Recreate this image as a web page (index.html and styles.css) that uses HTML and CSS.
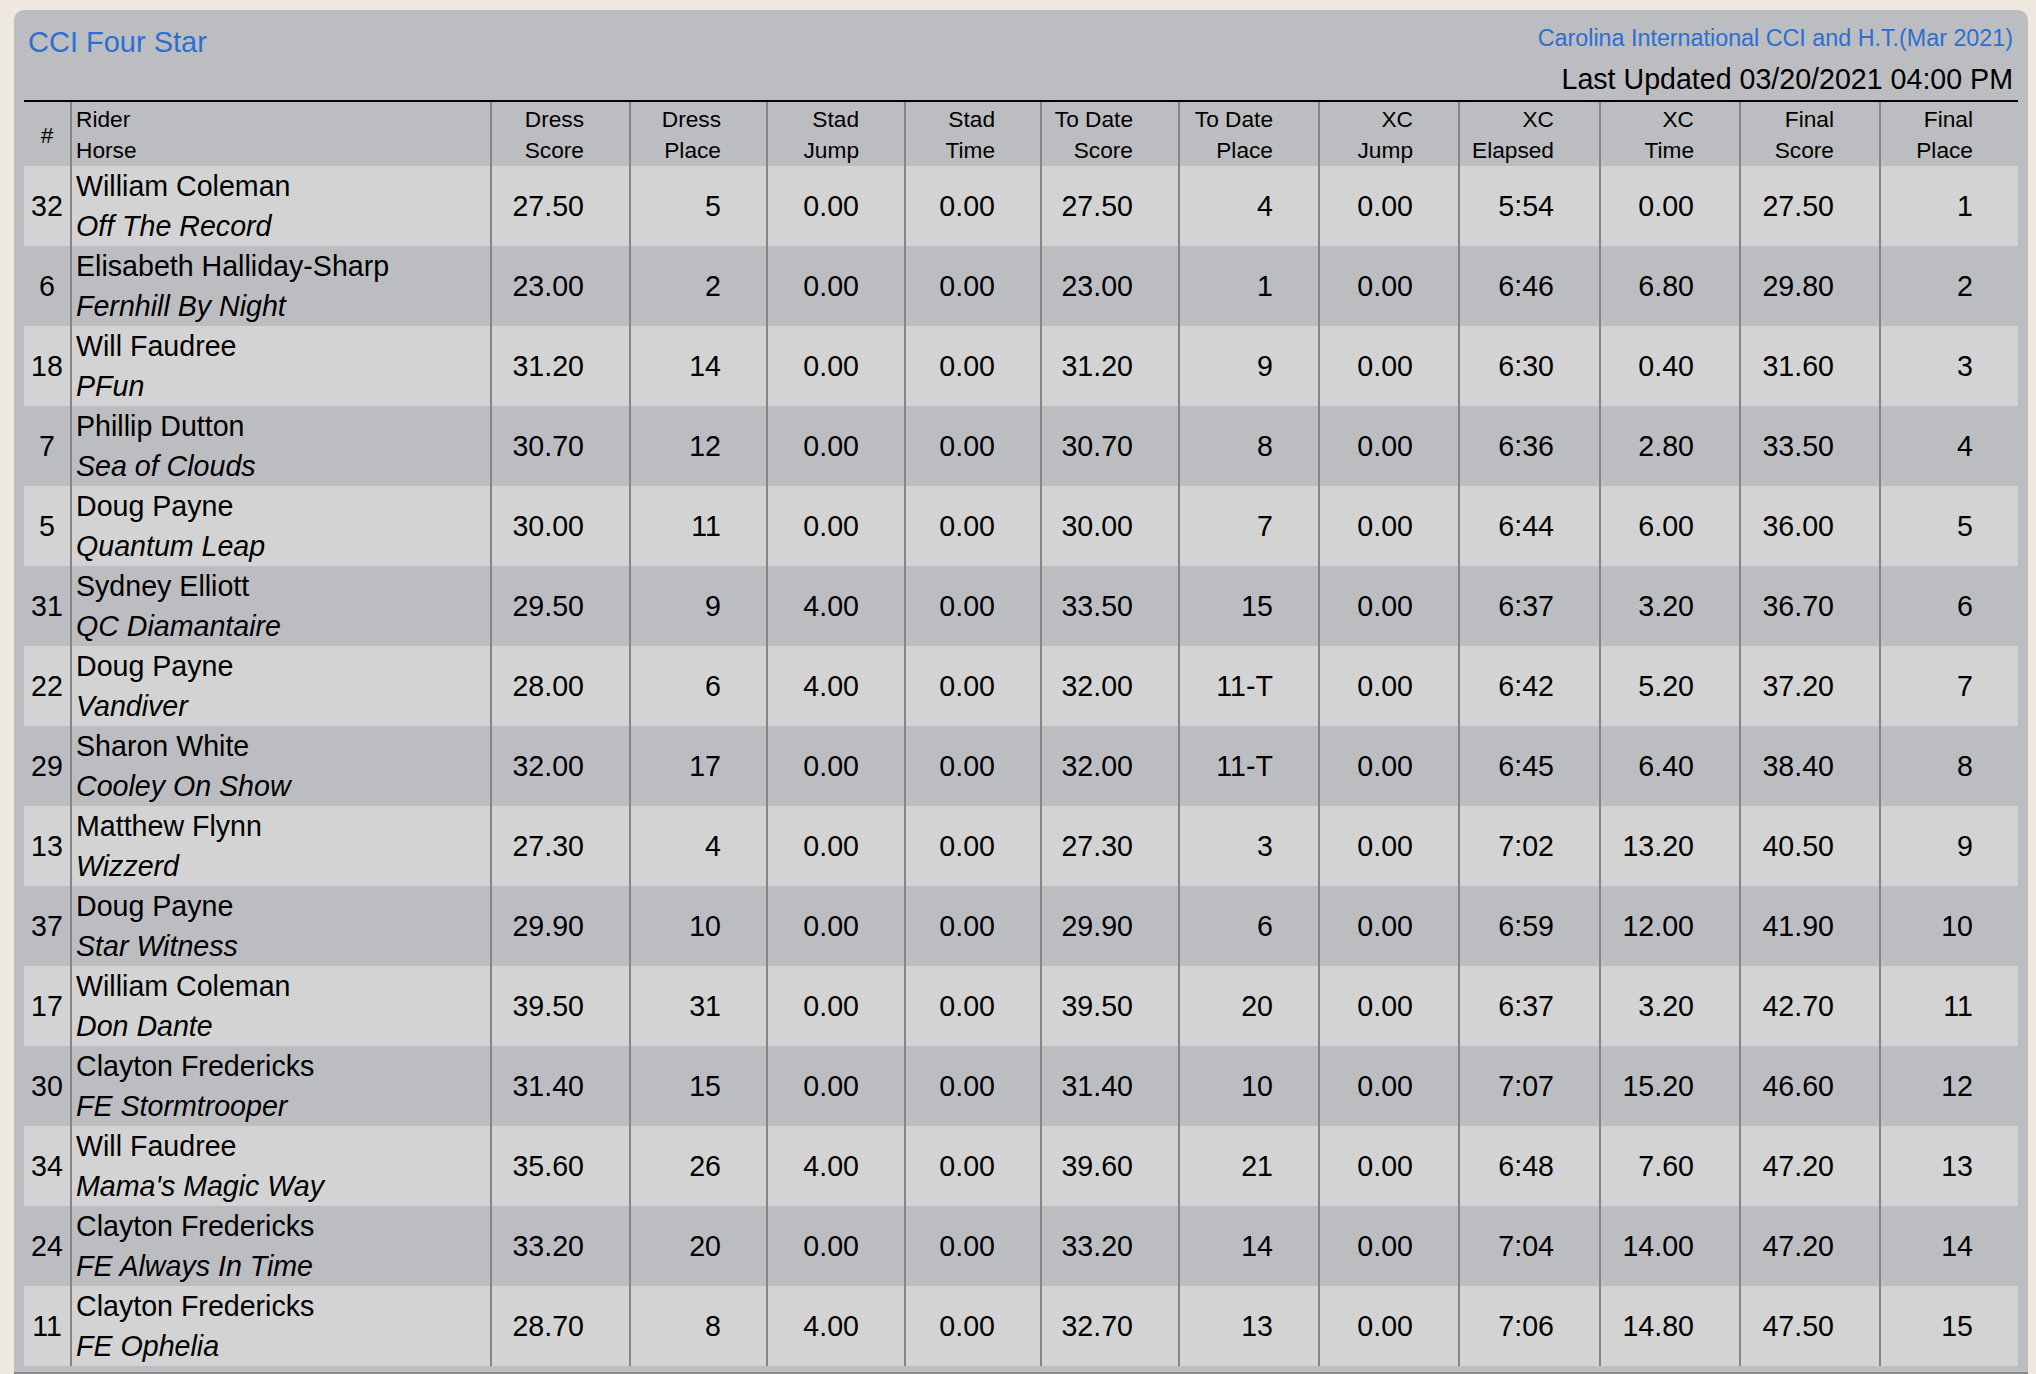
FILE: index.html
```html
<!DOCTYPE html>
<html lang="en">
<head>
<meta charset="utf-8">
<title>CCI Four Star - Results</title>
<link rel="stylesheet" href="styles.css">
</head>
<body>
<div class="panel">
  <div class="head">
    <div class="title">CCI Four Star</div>
    <div class="meta">
      <div class="event">Carolina International CCI and H.T.(Mar 2021)</div>
      <div class="updated">Last Updated 03/20/2021 04:00 PM</div>
    </div>
  </div>
  <table class="results">
    <colgroup>
      <col class="c-num">
      <col class="c-rider">
      <col class="c-a">
      <col class="c-b">
      <col class="c-c">
      <col class="c-d">
      <col class="c-c">
      <col class="c-e">
      <col class="c-e">
      <col class="c-f">
      <col class="c-e">
      <col class="c-e">
      <col class="c-g">
    </colgroup>
    <thead>
      <tr>
        <th class="num">#</th>
        <th class="rider">Rider<br>Horse</th>
        <th>Dress<br>Score</th>
        <th>Dress<br>Place</th>
        <th>Stad<br>Jump</th>
        <th>Stad<br>Time</th>
        <th>To Date<br>Score</th>
        <th>To Date<br>Place</th>
        <th>XC<br>Jump</th>
        <th>XC<br>Elapsed</th>
        <th>XC<br>Time</th>
        <th>Final<br>Score</th>
        <th>Final<br>Place</th>
      </tr>
    </thead>
    <tbody>
      <tr><td class="num">32</td><td class="rider">William Coleman<br><i>Off The Record</i></td><td>27.50</td><td>5</td><td>0.00</td><td>0.00</td><td>27.50</td><td>4</td><td>0.00</td><td>5:54</td><td>0.00</td><td>27.50</td><td>1</td></tr>
      <tr><td class="num">6</td><td class="rider">Elisabeth Halliday-Sharp<br><i>Fernhill By Night</i></td><td>23.00</td><td>2</td><td>0.00</td><td>0.00</td><td>23.00</td><td>1</td><td>0.00</td><td>6:46</td><td>6.80</td><td>29.80</td><td>2</td></tr>
      <tr><td class="num">18</td><td class="rider">Will Faudree<br><i>PFun</i></td><td>31.20</td><td>14</td><td>0.00</td><td>0.00</td><td>31.20</td><td>9</td><td>0.00</td><td>6:30</td><td>0.40</td><td>31.60</td><td>3</td></tr>
      <tr><td class="num">7</td><td class="rider">Phillip Dutton<br><i>Sea of Clouds</i></td><td>30.70</td><td>12</td><td>0.00</td><td>0.00</td><td>30.70</td><td>8</td><td>0.00</td><td>6:36</td><td>2.80</td><td>33.50</td><td>4</td></tr>
      <tr><td class="num">5</td><td class="rider">Doug Payne<br><i>Quantum Leap</i></td><td>30.00</td><td>11</td><td>0.00</td><td>0.00</td><td>30.00</td><td>7</td><td>0.00</td><td>6:44</td><td>6.00</td><td>36.00</td><td>5</td></tr>
      <tr><td class="num">31</td><td class="rider">Sydney Elliott<br><i>QC Diamantaire</i></td><td>29.50</td><td>9</td><td>4.00</td><td>0.00</td><td>33.50</td><td>15</td><td>0.00</td><td>6:37</td><td>3.20</td><td>36.70</td><td>6</td></tr>
      <tr><td class="num">22</td><td class="rider">Doug Payne<br><i>Vandiver</i></td><td>28.00</td><td>6</td><td>4.00</td><td>0.00</td><td>32.00</td><td>11-T</td><td>0.00</td><td>6:42</td><td>5.20</td><td>37.20</td><td>7</td></tr>
      <tr><td class="num">29</td><td class="rider">Sharon White<br><i>Cooley On Show</i></td><td>32.00</td><td>17</td><td>0.00</td><td>0.00</td><td>32.00</td><td>11-T</td><td>0.00</td><td>6:45</td><td>6.40</td><td>38.40</td><td>8</td></tr>
      <tr><td class="num">13</td><td class="rider">Matthew Flynn<br><i>Wizzerd</i></td><td>27.30</td><td>4</td><td>0.00</td><td>0.00</td><td>27.30</td><td>3</td><td>0.00</td><td>7:02</td><td>13.20</td><td>40.50</td><td>9</td></tr>
      <tr><td class="num">37</td><td class="rider">Doug Payne<br><i>Star Witness</i></td><td>29.90</td><td>10</td><td>0.00</td><td>0.00</td><td>29.90</td><td>6</td><td>0.00</td><td>6:59</td><td>12.00</td><td>41.90</td><td>10</td></tr>
      <tr><td class="num">17</td><td class="rider">William Coleman<br><i>Don Dante</i></td><td>39.50</td><td>31</td><td>0.00</td><td>0.00</td><td>39.50</td><td>20</td><td>0.00</td><td>6:37</td><td>3.20</td><td>42.70</td><td>11</td></tr>
      <tr><td class="num">30</td><td class="rider">Clayton Fredericks<br><i>FE Stormtrooper</i></td><td>31.40</td><td>15</td><td>0.00</td><td>0.00</td><td>31.40</td><td>10</td><td>0.00</td><td>7:07</td><td>15.20</td><td>46.60</td><td>12</td></tr>
      <tr><td class="num">34</td><td class="rider">Will Faudree<br><i>Mama's Magic Way</i></td><td>35.60</td><td>26</td><td>4.00</td><td>0.00</td><td>39.60</td><td>21</td><td>0.00</td><td>6:48</td><td>7.60</td><td>47.20</td><td>13</td></tr>
      <tr><td class="num">24</td><td class="rider">Clayton Fredericks<br><i>FE Always In Time</i></td><td>33.20</td><td>20</td><td>0.00</td><td>0.00</td><td>33.20</td><td>14</td><td>0.00</td><td>7:04</td><td>14.00</td><td>47.20</td><td>14</td></tr>
      <tr><td class="num">11</td><td class="rider">Clayton Fredericks<br><i>FE Ophelia</i></td><td>28.70</td><td>8</td><td>4.00</td><td>0.00</td><td>32.70</td><td>13</td><td>0.00</td><td>7:06</td><td>14.80</td><td>47.50</td><td>15</td></tr>
    </tbody>
  </table>
</div>
</body>
</html>
```
FILE: styles.css
```css
html, body {
  margin: 0;
  padding: 0;
}

body {
  background: #efe8de;
  font-family: "Liberation Sans", Arial, Helvetica, sans-serif;
  color: #000;
}

.panel {
  margin: 10px 8px 0 14px;
  padding: 15px 10px 6px 10px;
  background: #bcbdc0;
  border-radius: 10px 10px 0 0;
  border-bottom: 2px solid #8a8b8d;
}

.head {
  display: flex;
  justify-content: space-between;
  align-items: flex-start;
  height: 75px;
  padding: 0 5px 0 4px;
}

.title {
  color: #2c6fd1;
  font-size: 29px;
  line-height: 33px;
  margin-top: 1px;
}

.meta {
  text-align: right;
}

.event {
  color: #2c6fd1;
  font-size: 23.3px;
  line-height: 27px;
}

.updated {
  font-size: 28.6px;
  line-height: 33px;
  margin-top: 11px;
}

.results {
  width: 1994px;
  table-layout: fixed;
  border-collapse: separate;
  border-spacing: 0;
  border-top: 2px solid #000;
}

.c-num { width: 46px; }
.c-rider { width: 420px; }
.c-a { width: 139px; }
.c-b { width: 137px; }
.c-c { width: 138px; }
.c-d { width: 136px; }
.c-e { width: 140px; }
.c-f { width: 141px; }
.c-g { width: 139px; }

.results th,
.results td {
  padding: 0 45px 0 0;
  text-align: right;
  vertical-align: middle;
  white-space: nowrap;
  border-left: 2px solid #858585;
}

.results th:first-child,
.results td:first-child {
  border-left: none;
}

.results th {
  font-weight: normal;
  font-size: 22.7px;
  line-height: 31px;
  padding-top: 2px;
  height: 62px;
}

.results td {
  font-size: 28.6px;
  line-height: 40px;
  height: 80px;
}

.results tbody tr:nth-child(odd) {
  background: #d3d3d3;
}

.results tbody tr:nth-child(even) {
  background: #bcbdc0;
}

.results .num {
  text-align: center;
  padding-right: 0;
}

.results .rider {
  text-align: left;
  padding-right: 0;
  padding-left: 4px;
}
```
